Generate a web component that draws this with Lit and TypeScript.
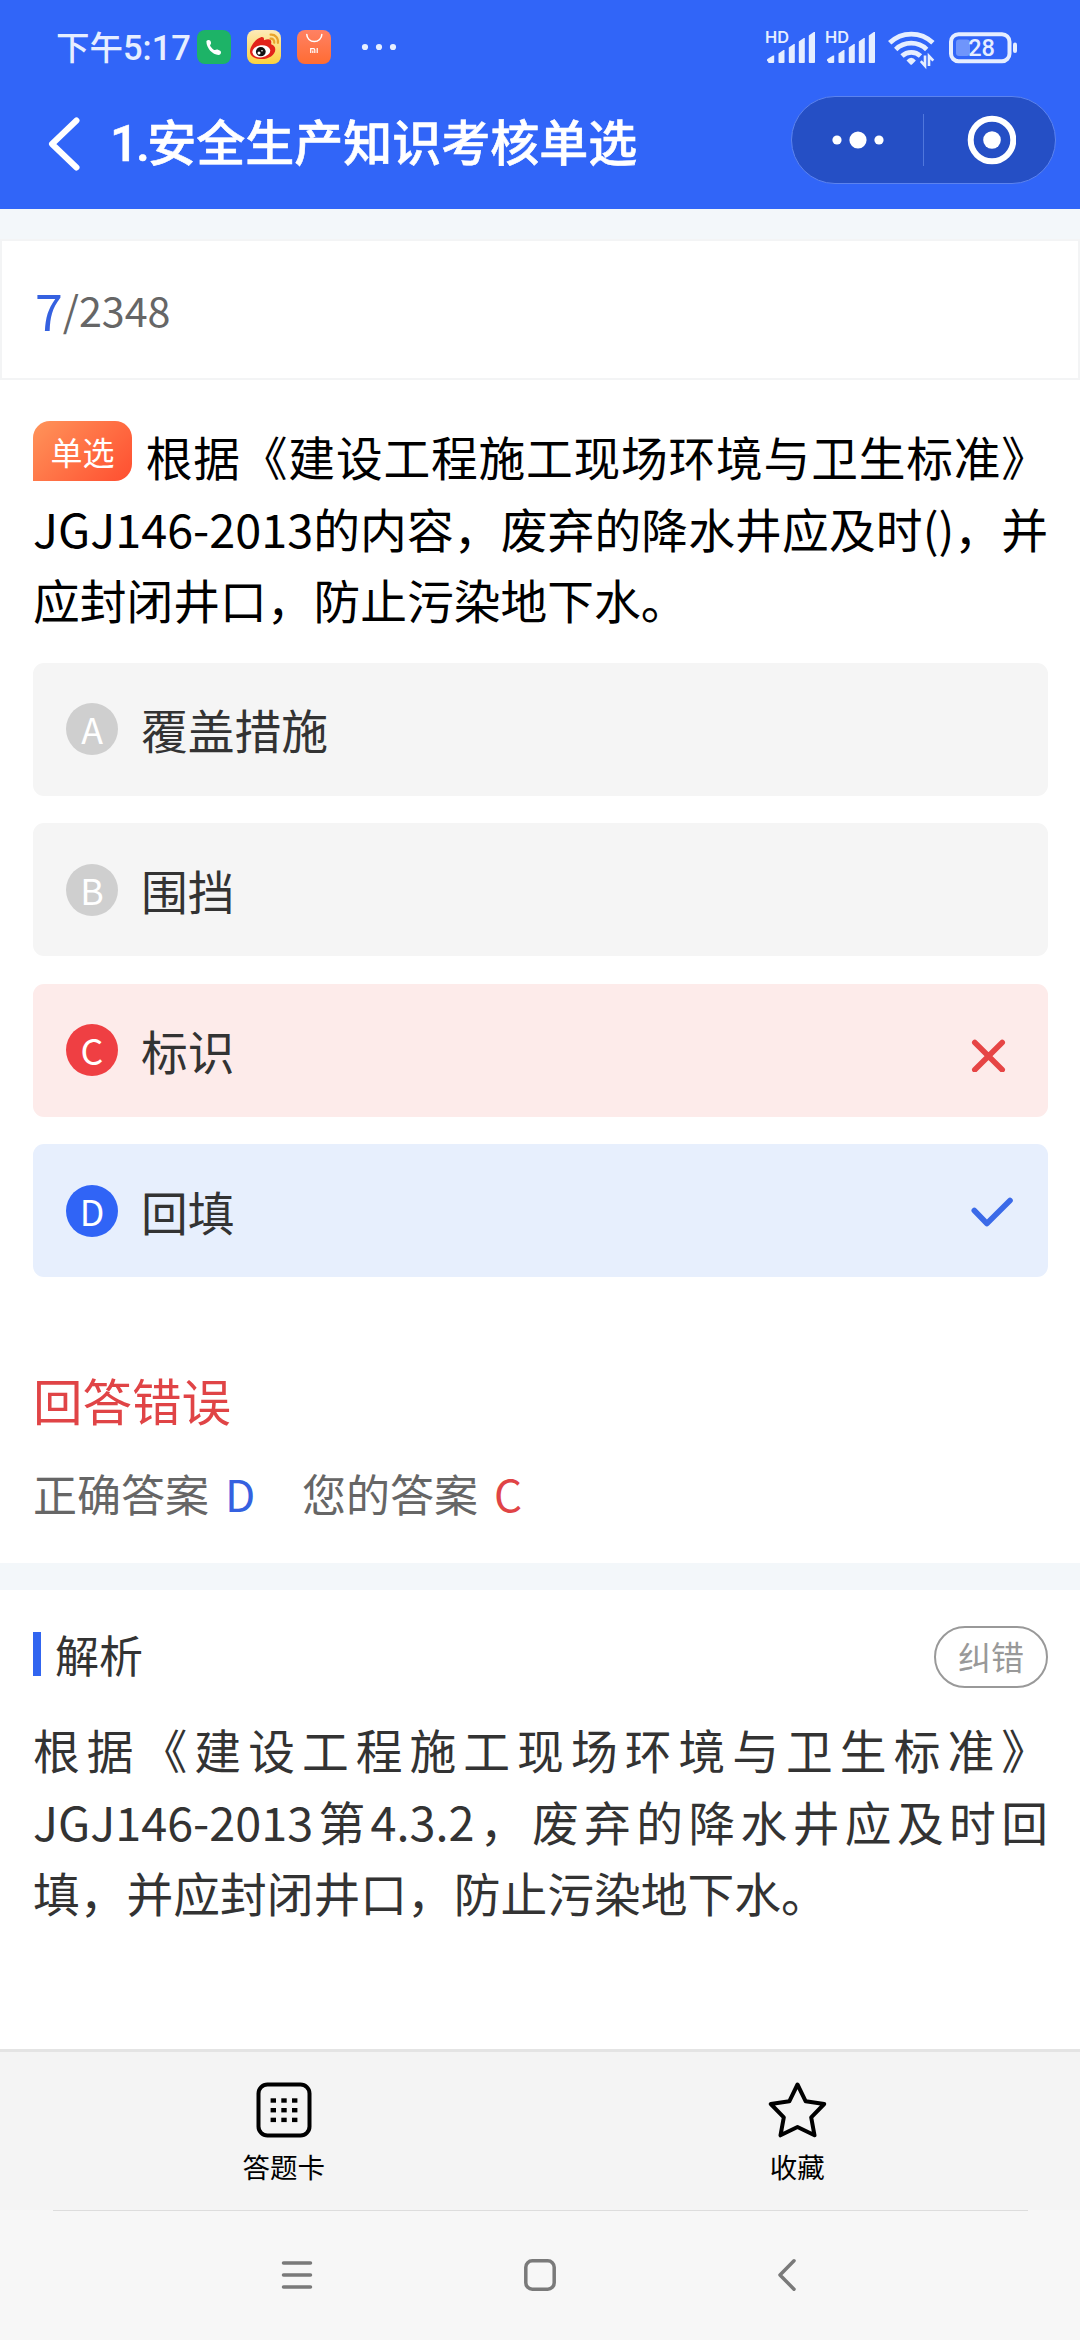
import { LitElement, html, css, svg, nothing } from "lit";
import { customElement, property } from "lit/decorators.js";
import { classMap } from "lit/directives/class-map.js";

type OptionState = "idle" | "wrong" | "right";

interface Choice {
  key: string;
  label: string;
  state: OptionState;
}

const CHOICES: Choice[] = [
  { key: "A", label: "覆盖措施", state: "idle" },
  { key: "B", label: "围挡", state: "idle" },
  { key: "C", label: "标识", state: "wrong" },
  { key: "D", label: "回填", state: "right" },
];

@customElement("status-bar")
class StatusBar extends LitElement {
  static styles = css`
    :host {
      display: flex;
      align-items: center;
      height: 94px;
      padding: 0 62px 0 56px;
      color: #e6eeff;
    }
    .time {
      font-size: 33.5px;
      font-weight: 500;
      line-height: 40px;
      white-space: nowrap;
      width: 141px;
    }
    .clock {
      font-family: Roboto, sans-serif;
      font-size: 34.5px;
    }
    .apps {
      display: flex;
      gap: 16px;
    }
    .more {
      margin-left: 30px;
    }
    .right {
      display: flex;
      align-items: center;
      margin-left: auto;
    }
    .signal {
      margin-right: 9px;
    }
    .wifi {
      margin: 1px 14px 0 3px;
    }
    svg {
      display: block;
      overflow: visible;
    }
    .hd {
      font: 600 16px Inter, "Liberation Sans", sans-serif;
      fill: #e6eeff;
    }
    .level {
      font: 500 23.5px Roboto, sans-serif;
      fill: #e6eeff;
    }
  `;

  private signal() {
    return html`<svg class="signal" width="51" height="34" viewBox="0 0 51 34" fill="#e6eeff">
      <text class="hd" x="0" y="13" textLength="24" lengthAdjust="spacingAndGlyphs">HD</text>
      <path d="M3 31.500a1.500 1.500 0 0 1-.600-2.500L8 25.500h1.200v6.500a1 1 0 0 1-1 1H3.500Z" />
      <path d="M13.500 23.500l5-3.500h1v12a1 1 0 0 1-1 1h-4a1 1 0 0 1-1-1Z" />
      <path d="M23.800 17.500l5-3.500h1v18a1 1 0 0 1-1 1h-4a1 1 0 0 1-1-1Z" />
      <path d="M33.800 11.500l5-3.500h1v24a1 1 0 0 1-1 1h-4a1 1 0 0 1-1-1Z" />
      <path d="M43.800 5.500l5-3.500h1.200v30a1 1 0 0 1-1 1h-4.200a1 1 0 0 1-1-1Z" />
    </svg>`;
  }

  render() {
    return html`
      <span class="time">下午<span class="clock">5:17</span></span>
      <div class="apps">
        <svg width="34" height="34" viewBox="0 0 34 34">
          <rect width="34" height="34" rx="8" fill="#1db367" />
          <path
            d="M9.400 11.600c0-1.200.900-1.600 2-1.700 1.500-.100 2 .600 2.400 1.900.500 1.600.200 2.100-.600 3.100-.300.500-.100 1 1.200 2.500 1.600 1.800 2.900 2.900 3.600 2.700 1.200-.500 1.800-.800 3.500-.200 1.900.600 2.600 1.200 2.500 2.600-.100 1.600-.900 2.400-2.500 2.400-6 0-12.100-6.700-12.100-13.300Z"
            fill="#fff"
          />
        </svg>
        <svg width="34" height="34" viewBox="0 0 34 34">
          <defs>
            <linearGradient id="wb" x1="0" y1="0" x2="0" y2="1">
              <stop offset="0" stop-color="#fdebb9" />
              <stop offset="1" stop-color="#fbd23f" />
            </linearGradient>
          </defs>
          <rect width="34" height="34" rx="8" fill="url(#wb)" />
          <path
            d="M3 21.500C3 16 9 8.500 14 7.200c2.400-.500 3.400.900 2.900 3.100 3.600-1.500 7.600-1.600 7.400 1.900-.100 1.300-.400 1.900.300 2.300C27 15.400 28.300 17 28.300 19.400 28.300 25 21.500 29 14.800 29 8.500 29 3 26.500 3 21.500Z"
            fill="#e2231a"
          />
          <ellipse cx="14.300" cy="21.300" rx="9" ry="6" transform="rotate(-8 14.300 21.300)" fill="#fff" />
          <ellipse cx="13.800" cy="21.700" rx="4.900" ry="4.600" fill="#111" />
          <circle cx="12" cy="23" r="1.500" fill="#fff" />
          <circle cx="15" cy="20.800" r=".800" fill="#fff" />
          <g fill="none" stroke="#e9a32b" stroke-width="2.200" stroke-linecap="round">
            <path d="M23.600 4.600c4.400-.500 8 3.200 7.300 8.200" />
            <path d="M23.600 8.700c2.400-.200 4 1.600 3.600 4" />
          </g>
        </svg>
        <svg width="34" height="34" viewBox="0 0 34 34">
          <defs>
            <linearGradient id="mi" x1="0" y1="0" x2="0" y2="1">
              <stop offset="0" stop-color="#ff8163" />
              <stop offset="1" stop-color="#ff6c33" />
            </linearGradient>
          </defs>
          <rect width="34" height="34" rx="8" fill="url(#mi)" />
          <g fill="none" stroke="#fff" stroke-width="1.500">
            <path d="M9.800 4.500a7.500 7 0 0 0 15 0" stroke-linecap="round" />
            <path d="M13.700 23v-4.300h2.800q1.300 0 1.300 1.300v3M15.800 20.500v2.500M20.200 18v5" stroke-width="1.200" />
          </g>
        </svg>
      </div>
      <svg class="more" width="36" height="8" viewBox="0 0 36 8" fill="#e6eeff">
        <circle cx="4" cy="4" r="3.100" />
        <circle cx="18" cy="4" r="3.100" />
        <circle cx="32" cy="4" r="3.100" />
      </svg>
      <div class="right">
        ${this.signal()}${this.signal()}
        <svg class="wifi" width="47" height="36" viewBox="0 0 47 36">
          <g fill="none" stroke="#e6eeff" stroke-width="4.800">
            <path d="M1.700 12.800a31 31 0 0 1 43.200 0" />
            <path d="M7.700 19.400a22.500 22.500 0 0 1 31 0" />
            <path d="M14 26a13.500 13.500 0 0 1 18.500 0" />
          </g>
          <path d="M18.500 30.500q4.700-5.500 9.400 0l-3.700 3.800q-1 1-2 0Z" fill="#e6eeff" />
          <g fill="none" stroke="#e6eeff" stroke-width="2.600">
            <path d="M37 25.500v10.300l-4.200-4.600M41 36v-10l4.300 4.600" />
          </g>
        </svg>
        <svg width="69" height="31" viewBox="0 0 69 31">
          <rect x="2" y="2.200" width="58.500" height="27" rx="7.500" fill="none" stroke="#e6eeff" stroke-width="4" />
          <rect x="7" y="7.500" width="14" height="16.500" rx="3" fill="#6f95fb" />
          <rect x="64" y="10.500" width="4" height="10.500" rx="2" fill="#e6eeff" />
          <text class="level" x="32.500" y="24.200" text-anchor="middle">28</text>
        </svg>
      </div>
    `;
  }
}

@customElement("title-bar")
class TitleBar extends LitElement {
  @property({ type: Number }) index = 1;
  @property() heading = "";

  static styles = css`
    :host {
      display: flex;
      align-items: center;
      height: 92px;
      padding: 0 24px 23px 48px;
      color: #fff;
    }
    svg {
      display: block;
    }
    .back {
      margin-top: 8px;
    }
    .heading {
      flex: 1;
      margin: 3px 0 0 30px;
      font-size: 49px;
      font-weight: 500;
      line-height: 60px;
      white-space: nowrap;
      -webkit-text-stroke: 0.6px #fff;
    }
    .index {
      font-family: Roboto, sans-serif;
      font-size: 50px;
      letter-spacing: -2.5px;
    }
    .capsule {
      box-sizing: border-box;
      display: flex;
      align-items: center;
      width: 265px;
      height: 88px;
      border: 1px solid #5c83ee;
      border-radius: 44px;
      background: #254fc5;
    }
    .half {
      display: flex;
      flex: 1;
      justify-content: center;
    }
    .rule {
      width: 1px;
      height: 52px;
      background: #5077dc;
    }
    .target {
      margin-left: 2px;
    }
  `;

  render() {
    return html`
      <svg class="back" width="32" height="54" viewBox="0 0 32 54">
        <path d="M28.500 3.500L4 27l24.500 23.500" fill="none" stroke="#fff" stroke-width="6" stroke-linecap="round" stroke-linejoin="round" />
      </svg>
      <div class="heading"><span class="index">${this.index}.</span>${this.heading}</div>
      <div class="capsule">
        <div class="half">
          <svg width="52" height="18" viewBox="0 0 52 18" fill="#fff">
            <circle cx="5" cy="9" r="4.600" />
            <circle cx="26" cy="9" r="8.600" />
            <circle cx="47" cy="9" r="4.600" />
          </svg>
        </div>
        <span class="rule"></span>
        <div class="half">
          <svg class="target" width="50" height="50" viewBox="0 0 50 50">
            <circle cx="26" cy="25" r="21.300" fill="none" stroke="#fff" stroke-width="6" />
            <circle cx="26" cy="25" r="8.800" fill="#fff" />
          </svg>
        </div>
      </div>
    `;
  }
}

@customElement("choice-row")
class ChoiceRow extends LitElement {
  @property({ attribute: false }) choice!: Choice;

  static styles = css`
    .row {
      box-sizing: border-box;
      display: flex;
      align-items: center;
      height: 133px;
      padding: 0 33px;
      border-radius: 11px;
      background: #f5f5f5;
      color: #333;
    }
    .wrong {
      background: #fdebea;
    }
    .right {
      background: #e7effd;
    }
    .key {
      display: flex;
      align-items: center;
      justify-content: center;
      width: 52px;
      height: 52px;
      border-radius: 50%;
      background: #cfcfcf;
      color: #fff;
      font-size: 35.75px;
      line-height: 52px;
    }
    .wrong .key {
      background: #ef3f43;
    }
    .right .key {
      background: #3064f6;
    }
    .label {
      flex: 1;
      margin-left: 23px;
      font-size: 46.75px;
      line-height: 64px;
    }
    svg {
      display: block;
      width: 44px;
      height: 44px;
    }
  `;

  private mark() {
    if (this.choice.state === "wrong") {
      return html`<svg viewBox="0 0 44 44">
        <path d="M3.800 14.500l27.400 27.200M31.200 14.500L3.800 41.700" fill="none" stroke="#e64545" stroke-width="5.600" stroke-linecap="round" />
      </svg>`;
    }
    if (this.choice.state === "right") {
      return html`<svg viewBox="0 0 44 44">
        <path d="M3.300 21.500L15.900 34.500 39 11.500" fill="none" stroke="#3b6ae8" stroke-width="5.600" stroke-linecap="round" stroke-linejoin="round" />
      </svg>`;
    }
    return nothing;
  }

  render() {
    const { key, label, state } = this.choice;
    return html`<div class=${classMap({ row: true, [state]: true })}>
      <span class="key">${key}</span>
      <span class="label">${label}</span>
      ${this.mark()}
    </div>`;
  }
}

@customElement("tool-bar")
class ToolBar extends LitElement {
  static styles = css`
    :host {
      box-sizing: border-box;
      display: flex;
      height: 161px;
      padding: 30px 26px 0 27px;
      border-top: 3px solid #e4e4e4;
      background: #f4f4f4;
      color: #000;
    }
    .item {
      display: flex;
      flex: 1;
      flex-direction: column;
      align-items: center;
      font-size: 27.5px;
      line-height: 34px;
    }
    svg {
      display: block;
      margin-bottom: 11px;
    }
  `;

  render() {
    const steps = [17.3, 28, 38.7];
    return html`
      <div class="item">
        <svg width="56" height="56" viewBox="0 0 56 56">
          <rect x="2.500" y="2.500" width="51" height="51" rx="9" fill="none" stroke="#000" stroke-width="4" />
          ${steps.map((_, row) =>
            steps.map((x) => svg`<rect x=${x - 2.7} y=${16.3 + row * 9.7} width="5.400" height="4.400" />`)
          )}
        </svg>
        <span>答题卡</span>
      </div>
      <div class="item">
        <svg width="60" height="56" viewBox="0 0 60 56">
          <path
            d="M30.500 2.500L38.700 19.300 57.200 22 44.200 35.300 47.500 53.300 30.500 45 13.500 53.300 16.800 35.300 3.800 22 22.300 19.300Z"
            fill="none"
            stroke="#000"
            stroke-width="4"
            stroke-linejoin="round"
          />
        </svg>
        <span>收藏</span>
      </div>
    `;
  }
}

@customElement("system-nav")
class SystemNav extends LitElement {
  static styles = css`
    :host {
      display: block;
      height: 130px;
      background: #f7f7f7;
    }
    .line {
      height: 1px;
      margin: 0 52px 0 53px;
      background: #ddd;
    }
    .keys {
      display: flex;
      align-items: center;
      justify-content: space-between;
      height: 128px;
      padding: 0 275px 0 279px;
    }
    .home {
      margin-right: 4px;
    }
    svg {
      display: block;
      width: 36px;
      height: 36px;
      fill: none;
      stroke: #7a7a7a;
      stroke-width: 3.5;
      stroke-linecap: round;
      stroke-linejoin: round;
    }
  `;

  render() {
    return html`
      <div class="line"></div>
      <div class="keys">
        <svg viewBox="0 0 36 36"><path d="M4.500 6h27M4.500 18h27M4.500 30h27" /></svg>
        <svg class="home" viewBox="0 0 36 36"><rect x="3.800" y="3.800" width="28.400" height="28.400" rx="6.500" /></svg>
        <svg viewBox="0 0 36 36"><path d="M25 3.800L11 18l14 14.200" /></svg>
      </div>
    `;
  }
}

@customElement("app-root")
class AppRoot extends LitElement {
  static styles = css`
    :host {
      display: flex;
      flex-direction: column;
      width: 1080px;
      height: 2340px;
      overflow: hidden;
      background: #fff;
      color: #333;
      font-family: "Noto Sans CJK SC", "Noto Sans", sans-serif;
    }
    .top {
      height: 209px;
      background: #3165f8;
    }
    .strip {
      height: 30px;
      background: #f3f7fa;
    }
    .progress {
      box-sizing: border-box;
      display: flex;
      align-items: center;
      height: 141px;
      padding: 0 0 2px 33px;
      border: 2px solid #f3f4f5;
      color: #666;
      font-size: 41.25px;
      line-height: 60px;
    }
    .current {
      color: #3561e0;
      font-size: 50px;
    }
    .question {
      padding: 40px 32px 28px 33px;
      color: #000;
      font-size: 46.75px;
      line-height: 71.5px;
      text-align: justify;
    }
    .badge {
      display: inline-flex;
      align-items: center;
      justify-content: center;
      width: 99px;
      height: 60px;
      margin-right: 13px;
      border-radius: 17px 17px 17px 0;
      background: linear-gradient(135deg, #ff945a, #ff4e30);
      color: #fff;
      font-size: 32px;
      line-height: 60px;
      vertical-align: 11px;
    }
    .choices {
      display: flex;
      flex-direction: column;
      gap: 27.5px;
      padding: 0 32px 0 33px;
    }
    .result {
      height: 286px;
      box-sizing: border-box;
      padding: 93px 33px 0;
    }
    .verdict {
      color: #e04446;
      font-size: 49.5px;
      line-height: 60px;
    }
    .answers {
      display: flex;
      margin-top: 33px;
      color: #666;
      font-size: 44px;
      line-height: 60px;
    }
    .value {
      width: 77px;
      margin-left: 16px;
    }
    .good {
      color: #3561e0;
    }
    .bad {
      color: #e04446;
    }
    .gap {
      height: 27px;
      background: #f3f7fa;
    }
    .analysis {
      flex: 1;
      padding: 36px 32px 0 33px;
    }
    .bar {
      display: flex;
      align-items: center;
      justify-content: space-between;
      height: 61px;
    }
    .name {
      display: flex;
      align-items: center;
      gap: 14px;
      margin-bottom: 6px;
      font-size: 44px;
      line-height: 54px;
    }
    .name::before {
      content: "";
      width: 8px;
      height: 44px;
      margin-top: 1px;
      background: #3165f0;
    }
    .report {
      box-sizing: border-box;
      width: 114px;
      height: 62px;
      border: 2px solid #999;
      border-radius: 31px;
      color: #999;
      font-size: 33px;
      line-height: 56px;
      text-align: center;
    }
    .detail {
      margin-top: 26px;
      font-size: 46.75px;
      line-height: 71.5px;
      text-align: justify;
    }
  `;

  render() {
    return html`
      <header class="top">
        <status-bar></status-bar>
        <title-bar index="1" heading="安全生产知识考核单选"></title-bar>
      </header>
      <div class="strip"></div>
      <div class="progress"><span class="current">7</span><span>/2348</span></div>
      <div class="question"><span class="badge">单选</span>根据《建设工程施工现场环境与卫生标准》JGJ146-2013的内容，废弃的降水井应及时()，并应封闭井口，防止污染地下水。</div>
      <div class="choices">${CHOICES.map((c) => html`<choice-row .choice=${c}></choice-row>`)}</div>
      <section class="result">
        <div class="verdict">回答错误</div>
        <div class="answers">
          <span>正确答案</span><span class="value good">D</span><span>您的答案</span><span class="value bad">C</span>
        </div>
      </section>
      <div class="gap"></div>
      <section class="analysis">
        <div class="bar">
          <div class="name">解析</div>
          <div class="report">纠错</div>
        </div>
        <div class="detail">根据《建设工程施工现场环境与卫生标准》JGJ146-2013第4.3.2，废弃的降水井应及时回填，并应封闭井口，防止污染地下水。</div>
      </section>
      <tool-bar></tool-bar>
      <system-nav></system-nav>
    `;
  }
}
